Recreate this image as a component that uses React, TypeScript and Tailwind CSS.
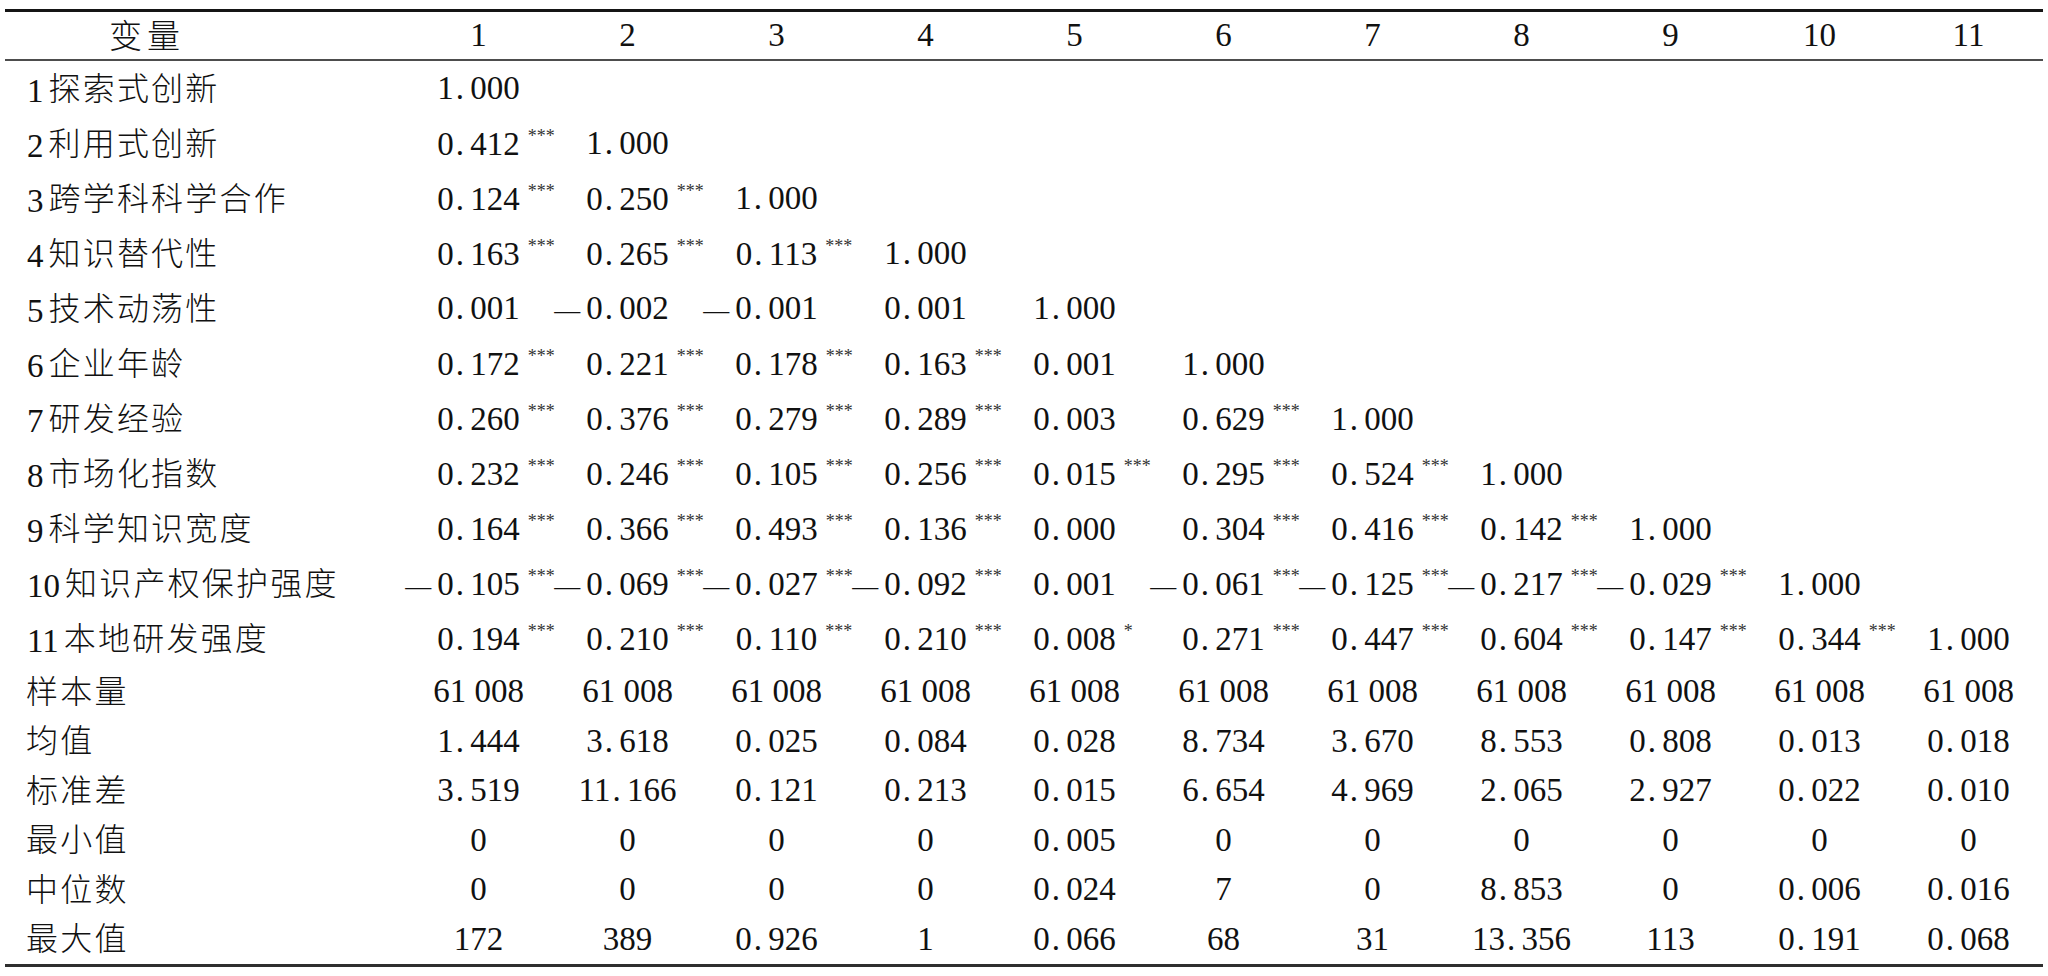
const labels = [
  ['1', '探索式创新'],
  ['2', '利用式创新'],
  ['3', '跨学科科学合作'],
  ['4', '知识替代性'],
  ['5', '技术动荡性'],
  ['6', '企业年龄'],
  ['7', '研发经验'],
  ['8', '市场化指数'],
  ['9', '科学知识宽度'],
  ['10', '知识产权保护强度'],
  ['11', '本地研发强度'],
];

// lower triangle, '-' = negative, trailing * = significance
const corr: string[][] = [
  ['1.000'],
  ['0.412***', '1.000'],
  ['0.124***', '0.250***', '1.000'],
  ['0.163***', '0.265***', '0.113***', '1.000'],
  ['0.001', '-0.002', '-0.001', '0.001', '1.000'],
  ['0.172***', '0.221***', '0.178***', '0.163***', '0.001', '1.000'],
  ['0.260***', '0.376***', '0.279***', '0.289***', '0.003', '0.629***', '1.000'],
  ['0.232***', '0.246***', '0.105***', '0.256***', '0.015***', '0.295***', '0.524***', '1.000'],
  ['0.164***', '0.366***', '0.493***', '0.136***', '0.000', '0.304***', '0.416***', '0.142***', '1.000'],
  ['-0.105***', '-0.069***', '-0.027***', '-0.092***', '0.001', '-0.061***', '-0.125***', '-0.217***', '-0.029***', '1.000'],
  ['0.194***', '0.210***', '0.110***', '0.210***', '0.008*', '0.271***', '0.447***', '0.604***', '0.147***', '0.344***', '1.000'],
];

const stats: [string, string[]][] = [
  ['样本量', Array(11).fill('61 008')],
  ['均值', ['1.444', '3.618', '0.025', '0.084', '0.028', '8.734', '3.670', '8.553', '0.808', '0.013', '0.018']],
  ['标准差', ['3.519', '11.166', '0.121', '0.213', '0.015', '6.654', '4.969', '2.065', '2.927', '0.022', '0.010']],
  ['最小值', ['0', '0', '0', '0', '0.005', '0', '0', '0', '0', '0', '0']],
  ['中位数', ['0', '0', '0', '0', '0.024', '7', '0', '8.853', '0', '0.006', '0.016']],
  ['最大值', ['172', '389', '0.926', '1', '0.066', '68', '31', '13.356', '113', '0.191', '0.068']],
];

const Num = ({ value }: { value: string }) => {
  const [int, dec] = value.split('.');
  return (
    <span className="whitespace-pre">
      {int}
      {dec !== undefined && (
        <>
          <span className="inline-block w-[16.5px] pl-[2px]">.</span>
          {dec}
        </>
      )}
    </span>
  );
};

const Cell = ({ v }: { v?: string }) => {
  if (!v) return <div className="w-[149px] shrink-0" />;
  const neg = v.startsWith('-');
  const stars = v.match(/\*+$/)?.[0] ?? '';
  const num = v.replace(/^-/, '').replace(/\*+$/, '');

  return (
    <div className="grid w-[149px] shrink-0 grid-cols-[minmax(0,1fr)_auto_minmax(0,1fr)] items-baseline">
      <div className="flex justify-end pr-[6px]">
        {neg && <span className="text-[26px] leading-none align-[8px]">—</span>}
      </div>
      <Num value={num} />
      <div className="whitespace-nowrap">
        {stars && <span className="pl-[8px] text-[18px] leading-none text-[#333] align-[13px]">{stars}</span>}
      </div>
    </div>
  );
};

const Label = ({ no, text }: { no?: string; text: string }) => (
  <div className={`w-[399px] shrink-0 ${no ? 'pl-[22px]' : 'pl-[21px]'}`}>
    {no && <span>{no}</span>}
    <span
      className={`${no ? 'ml-[5px]' : ''} font-['Noto_Sans_CJK_SC',sans-serif] text-[32px] font-light tracking-[2.2px] align-[2px]`}
    >
      {text}
    </span>
  </div>
);

export default function App() {
  return (
    <div className="h-[976px] w-[2048px] bg-white pl-[5px] pt-[9px] font-['Liberation_Serif','Noto_Sans_CJK_SC',serif] text-[33px] leading-none text-[#111]">
      <div className="w-[2038px] border-t-[3px] border-b-[3px] border-t-[#151515] border-b-[#2e2e2e]">
        {/* header */}
        <div className="flex h-[49px] items-center border-b-[2px] border-[#4d4d4d]">
          <div className="w-[399px] shrink-0 pl-[104px]">
            <span className="font-['Noto_Sans_CJK_SC',sans-serif] text-[33px] font-light tracking-[5px]">变量</span>
          </div>
          {Array.from({ length: 11 }, (_, i) => (
            <div key={i} className="w-[149px] shrink-0 text-center">
              {i + 1}
            </div>
          ))}
        </div>

        {/* correlation rows */}
        {labels.map(([no, text], r) => (
          <div key={no} className="flex h-[55.1px] items-center">
            <Label no={no} text={text} />
            {Array.from({ length: 11 }, (_, c) => (
              <Cell key={c} v={corr[r][c]} />
            ))}
          </div>
        ))}

        {/* descriptive stats */}
        {stats.map(([name, vals]) => (
          <div key={name} className="flex h-[49.5px] items-center">
            <Label text={name} />
            {vals.map((v, c) => (
              <div key={c} className="flex w-[149px] shrink-0 justify-center">
                <Num value={v} />
              </div>
            ))}
          </div>
        ))}
      </div>
    </div>
  );
}
